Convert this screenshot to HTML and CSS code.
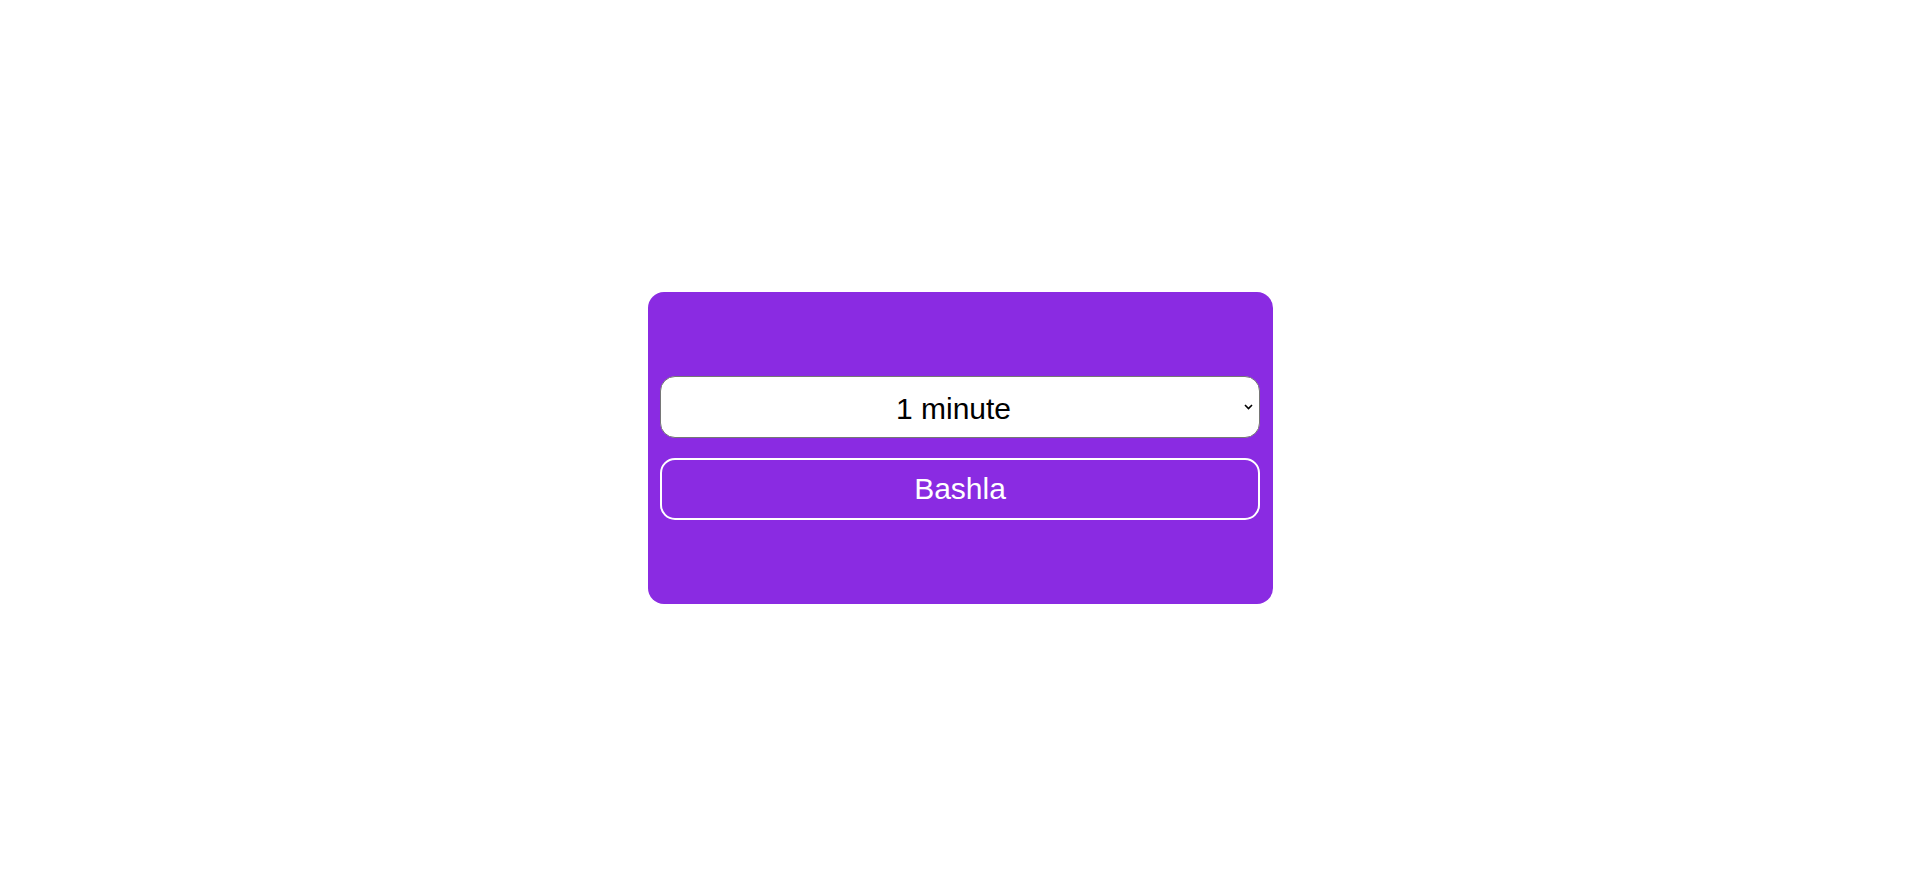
FILE: index.html
```html
<!DOCTYPE html>
<html lang="en">
<head>
<meta charset="utf-8">
<title>Timer</title>
<link rel="stylesheet" href="styles.css">
</head>
<body>
<main class="page">
  <div class="card">
    <div class="select-wrap">
      <select class="duration">
        <option>1 minute</option>
        <option>2 minutes</option>
        <option>5 minutes</option>
      </select>
      <svg class="chevron" width="9" height="6" viewBox="0 0 9 6" aria-hidden="true">
        <path d="M1 1 L4.5 4.5 L8 1" fill="none" stroke="#000" stroke-width="1.6"/>
      </svg>
    </div>
    <button class="start" type="button">Bashla</button>
  </div>
</main>
</body>
</html>
```

FILE: styles.css
```css
html, body {
  margin: 0;
  padding: 0;
  background: #ffffff;
  font-family: "Liberation Sans", Arial, sans-serif;
}

.page {
  box-sizing: border-box;
  height: 100vh;
  padding: 8px 0 0 8px;
  display: flex;
  align-items: center;
  justify-content: center;
}

.card {
  box-sizing: border-box;
  width: 625px;
  padding: 84px 12px;
  background: #8a2be2;
  border-radius: 16px;
  display: flex;
  flex-direction: column;
  gap: 20px;
}

.select-wrap {
  position: relative;
  width: 600px;
  height: 62px;
}

.duration {
  -webkit-appearance: none;
  appearance: none;
  box-sizing: border-box;
  width: 600px;
  height: 62px;
  padding: 3px 19px 0 6px;
  font-family: "Liberation Sans", Arial, sans-serif;
  font-size: 30px;
  text-align: center;
  text-align-last: center;
  color: #000;
  background: #fff;
  border: 1px solid #767676;
  border-radius: 15px;
}

.chevron {
  position: absolute;
  right: 7px;
  top: 28px;
  pointer-events: none;
}

.start {
  box-sizing: border-box;
  width: 600px;
  height: 62px;
  font-family: "Liberation Sans", Arial, sans-serif;
  font-size: 30px;
  color: #fff;
  background: #8a2be2;
  border: 2px solid #fff;
  border-radius: 15px;
  cursor: pointer;
}
```
